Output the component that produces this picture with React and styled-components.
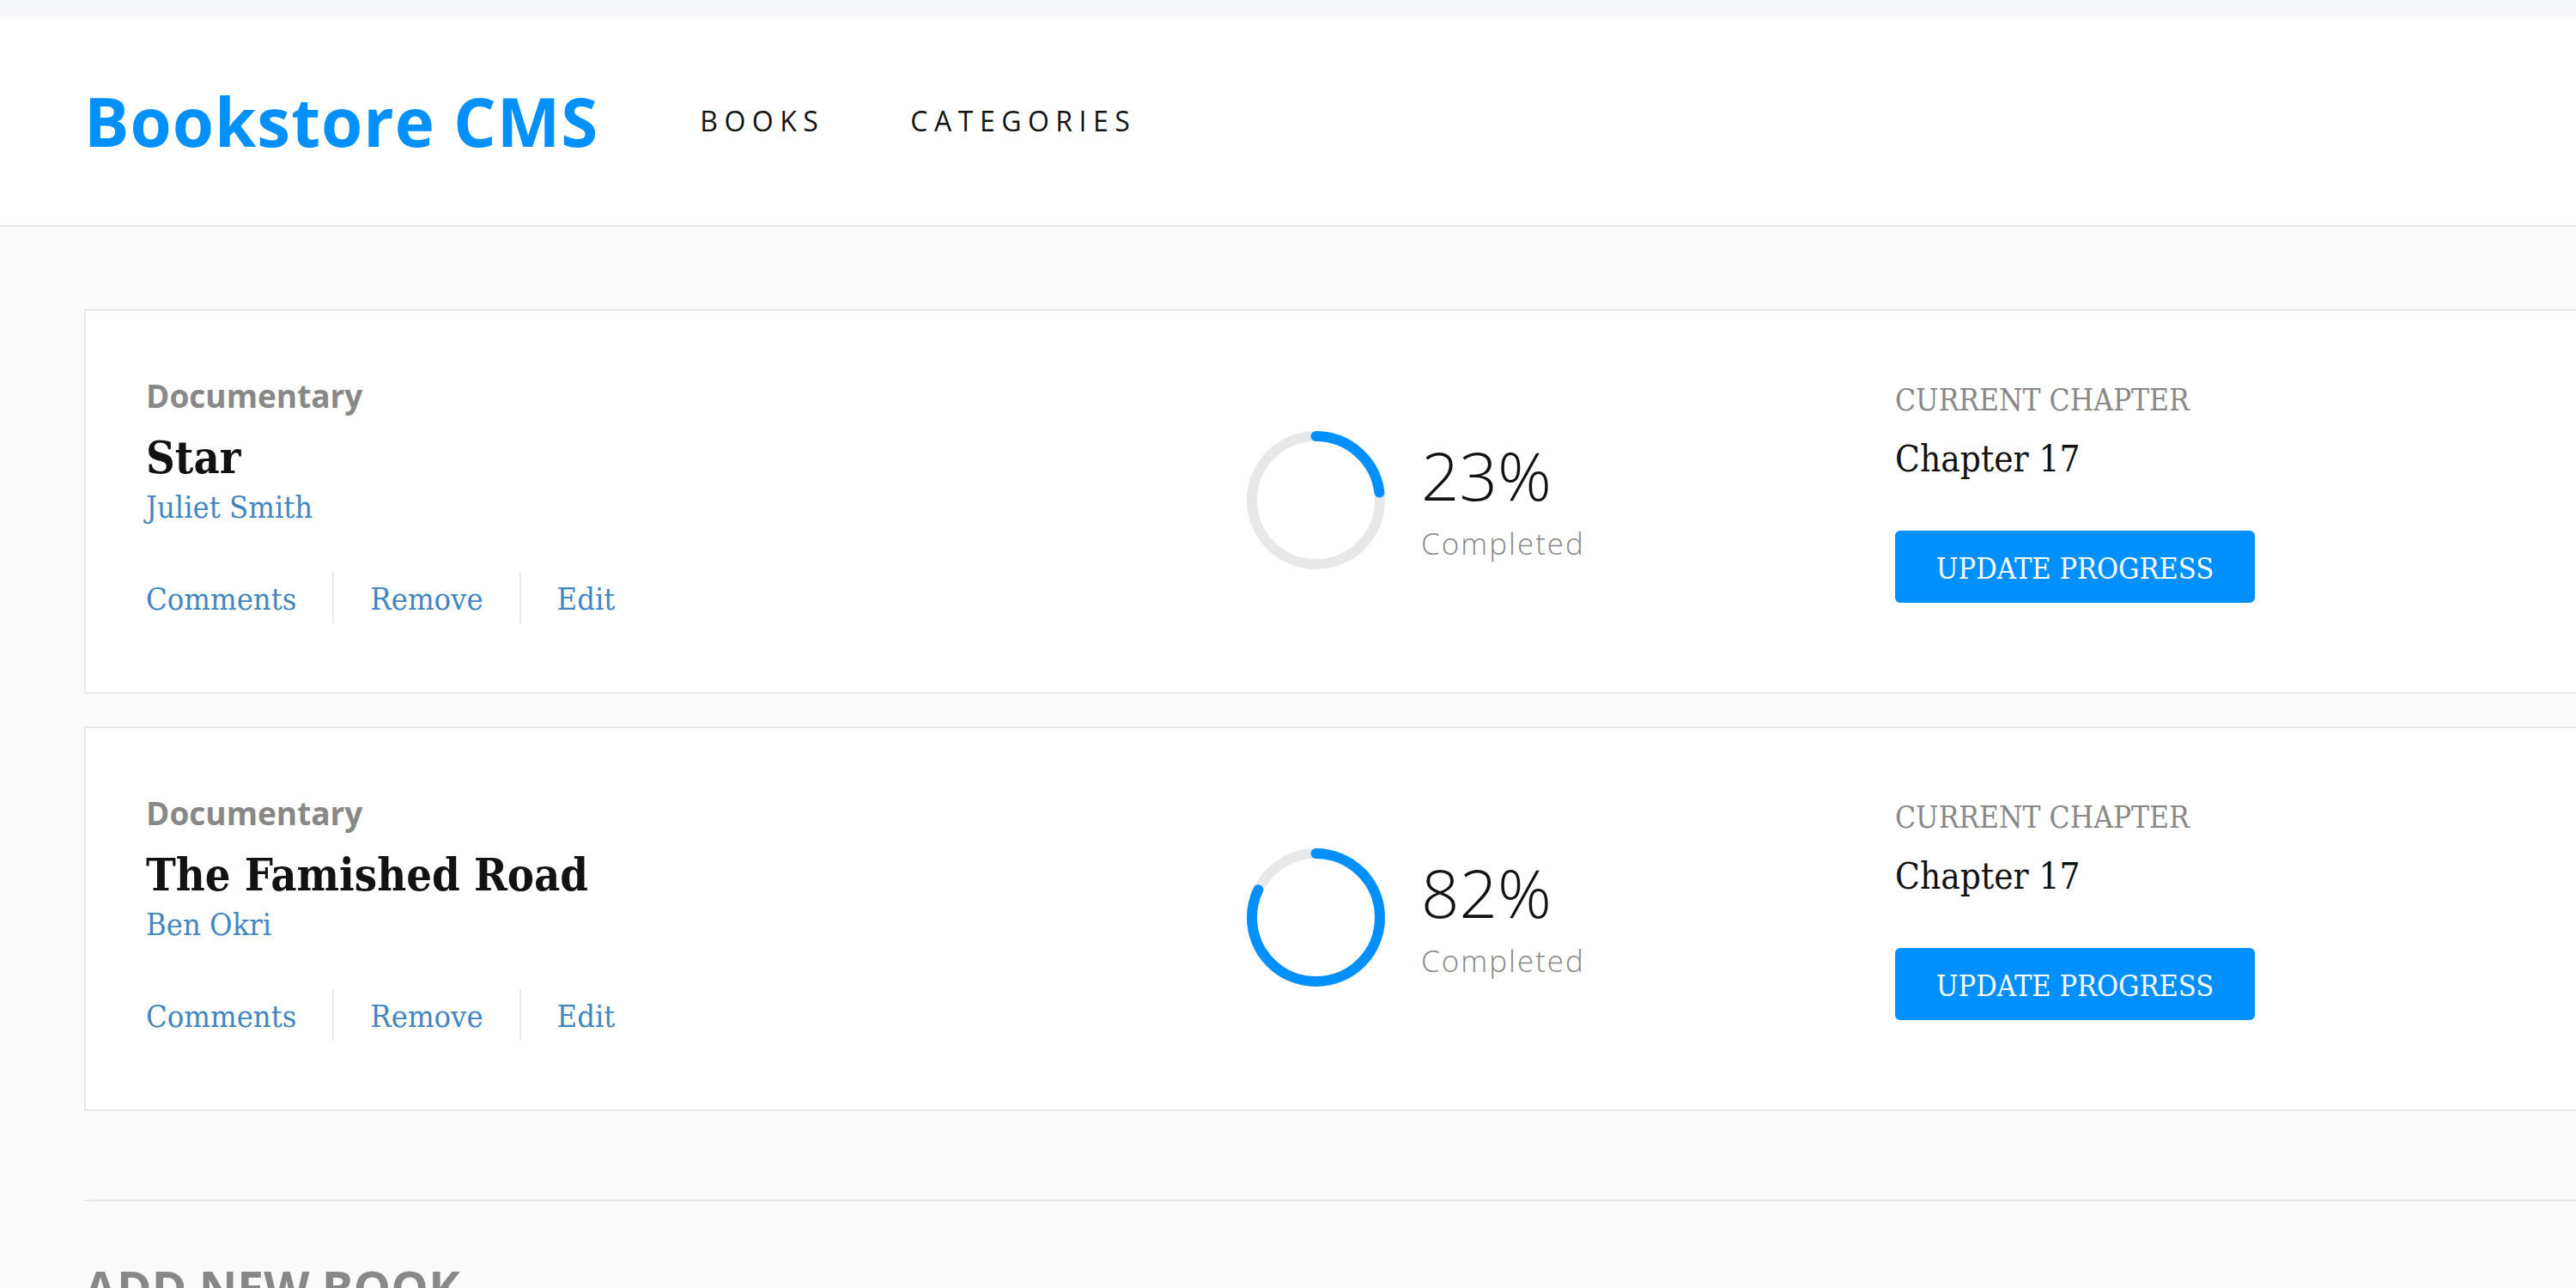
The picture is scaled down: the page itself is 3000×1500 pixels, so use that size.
import React from "react";
import styled, { createGlobalStyle } from "styled-components";

const books = [
  { id: 1, category: "Documentary", title: "Star", author: "Juliet Smith", progress: 23, chapter: "Chapter 17" },
  { id: 2, category: "Documentary", title: "The Famished Road", author: "Ben Okri", progress: 82, chapter: "Chapter 17" },
];

const sans = `"Open Sans", "Noto Sans", sans-serif`;
const slab = `"DejaVu Serif Condensed", "DejaVu Serif", serif`;

const GlobalStyle = createGlobalStyle`
  html, body {
    margin: 0;
    padding: 0;
    background: #fafafa;
    overflow: hidden;
  }
  * { box-sizing: border-box; }
`;

const Page = styled.div`
  min-width: 3200px;
  min-height: 1500px;
`;

const TopStrip = styled.div`
  height: 19px;
  background: #f5f6fa;
`;

const Header = styled.header`
  height: 245px;
  background: #fff;
  border-bottom: 2px solid #e8e8e8;
  display: flex;
  align-items: center;
  padding: 0 0 0 98px;
`;

const Logo = styled.h1`
  margin: 0 118px 0 0;
  font: 700 78px/1 ${sans};
  color: #0290ff;
  letter-spacing: 1px;
`;

const Nav = styled.nav`
  display: flex;
  gap: 100px;
`;

const NavLink = styled.a`
  font: 400 32px/1 ${sans};
  letter-spacing: 7.5px;
  color: #121212;
  text-transform: uppercase;
`;

const Main = styled.main`
  padding: 96px 0 0 98px;
  display: flex;
  flex-direction: column;
  gap: 38px;
`;

const Card = styled.section`
  width: 3100px;
  height: 448px;
  background: #fff;
  border: 2px solid #e8e8e8;
  padding: 79px 0 0 70px;
  display: flex;
  align-items: flex-start;
`;

const InfoCol = styled.div`
  width: 1282px;
  display: flex;
  flex-direction: column;
`;

const Category = styled.div`
  font: 700 37px/40px ${sans};
  color: #888;
`;

const Title = styled.h2`
  margin: 22px 0 0;
  font: 700 52px/60px ${slab};
  font-stretch: condensed;
  color: #121212;
`;

const Author = styled.div`
  margin-top: 8px;
  font: 400 36px/40px ${slab};
  font-stretch: condensed;
  color: #4386bf;
`;

const Actions = styled.div`
  margin-top: 55px;
  display: flex;
`;

const ActionLink = styled.button`
  height: 60px;
  padding: 3px 42px 0;
  background: none;
  border: 0;
  border-right: 2px solid #e8e8e8;
  font: 400 36px/57px ${slab};
  font-stretch: condensed;
  color: #4386bf;
  cursor: pointer;
  &:first-child { padding-left: 0; }
  &:last-child { border-right: 0; }
`;

const ProgressCol = styled.div`
  width: 755px;
  margin-top: 61px;
  display: flex;
  align-items: center;
  gap: 42px;
`;

const PercentBox = styled.div`
  display: flex;
  flex-direction: column;
`;

const Percent = styled.div`
  font: 300 78px/80px ${sans};
  color: #121212;
`;

const Completed = styled.div`
  margin-top: 20px;
  font: 300 35px/40px ${sans};
  letter-spacing: 2px;
  color: #888;
`;

const ChapterCol = styled.div`
  margin-top: 5px;
  display: flex;
  flex-direction: column;
  align-items: flex-start;
`;

const ChapterLabel = styled.div`
  font: 400 35px/40px ${slab};
  font-stretch: condensed;
  color: #888;
  text-transform: uppercase;
`;

const Chapter = styled.div`
  margin-top: 24px;
  font: 400 42px/50px ${slab};
  font-stretch: condensed;
  color: #121212;
`;

const UpdateButton = styled.button`
  margin-top: 58px;
  width: 419px;
  height: 84px;
  padding: 4px 0 0;
  border: 0;
  border-radius: 6px;
  background: #0290ff;
  color: #fff;
  font: 400 34px/80px ${slab};
  font-stretch: condensed;
  text-transform: uppercase;
  cursor: pointer;
`;

const Divider = styled.hr`
  width: 3100px;
  margin: 103px 0 0 98px;
  border: 0;
  border-top: 2px solid #e8e8e8;
`;

const FormTitle = styled.h2`
  margin: 71px 0 0 98px;
  font: 700 55px/60px ${sans};
  color: #888;
  text-transform: uppercase;
`;

const Ring = ({ value }) => {
  const size = 161;
  const stroke = 12;
  const r = (size - stroke) / 2;
  const c = 2 * Math.PI * r;
  return (
    <svg width={size} height={size} viewBox={`0 0 ${size} ${size}`}>
      <circle cx={size / 2} cy={size / 2} r={r} fill="none" stroke="#e8e8e8" strokeWidth={stroke} />
      <circle
        cx={size / 2}
        cy={size / 2}
        r={r}
        fill="none"
        stroke="#0290ff"
        strokeWidth={stroke}
        strokeLinecap="round"
        strokeDasharray={`${(c * value) / 100} ${c}`}
        transform={`rotate(-90 ${size / 2} ${size / 2})`}
      />
    </svg>
  );
};

const BookCard = ({ book }) => (
  <Card>
    <InfoCol>
      <Category>{book.category}</Category>
      <Title>{book.title}</Title>
      <Author>{book.author}</Author>
      <Actions>
        <ActionLink>Comments</ActionLink>
        <ActionLink>Remove</ActionLink>
        <ActionLink>Edit</ActionLink>
      </Actions>
    </InfoCol>
    <ProgressCol>
      <Ring value={book.progress} />
      <PercentBox>
        <Percent>{book.progress}%</Percent>
        <Completed>Completed</Completed>
      </PercentBox>
    </ProgressCol>
    <ChapterCol>
      <ChapterLabel>Current Chapter</ChapterLabel>
      <Chapter>{book.chapter}</Chapter>
      <UpdateButton>Update progress</UpdateButton>
    </ChapterCol>
  </Card>
);

export default function App() {
  return (
    <Page>
      <GlobalStyle />
      <TopStrip />
      <Header>
        <Logo>Bookstore CMS</Logo>
        <Nav>
          <NavLink>Books</NavLink>
          <NavLink>Categories</NavLink>
        </Nav>
      </Header>
      <Main>
        {books.map((book) => (
          <BookCard key={book.id} book={book} />
        ))}
      </Main>
      <Divider />
      <FormTitle>Add new book</FormTitle>
    </Page>
  );
}
